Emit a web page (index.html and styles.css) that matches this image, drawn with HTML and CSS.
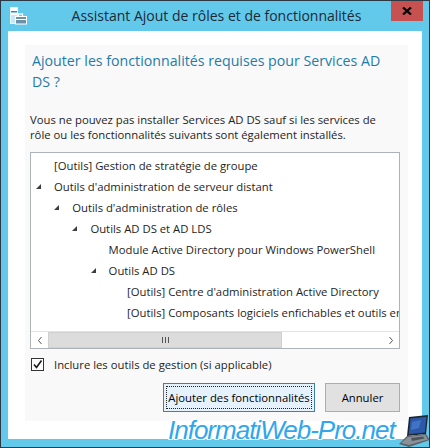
FILE: index.html
```html
<!DOCTYPE html>
<html lang="fr">
<head>
<meta charset="utf-8">
<title>Assistant Ajout de rôles et de fonctionnalités</title>
<link rel="stylesheet" href="styles.css">
</head>
<body>
<div class="window">
  <div class="titlebar">
    <svg class="app-icon" width="17" height="18" viewBox="0 0 17 18">
      <rect x="0.5" y="0.5" width="7" height="16" fill="#ffffff" stroke="#eaf6fc"/>
      <rect x="1" y="4" width="6" height="1.5" fill="#2f86c8"/>
      <rect x="1" y="8" width="6" height="8" fill="#c9e7f6"/>
      <rect x="8.5" y="7" width="4" height="3" fill="none" stroke="#ffffff" stroke-width="1.2"/>
      <rect x="5.5" y="9.5" width="11" height="7.5" fill="#6f8fa8" stroke="#ffffff" stroke-width="1"/>
      <line x1="6" y1="12.5" x2="16" y2="12.5" stroke="#ffffff" stroke-width="1"/>
    </svg>
    <div class="title">Assistant Ajout de rôles et de fonctionnalités</div>
    <div class="close">
      <svg width="10" height="8" viewBox="0 0 10 8"><path d="M1 0.5 L9 7.5 M9 0.5 L1 7.5" stroke="#000" stroke-width="2.2" fill="none"/></svg>
    </div>
  </div>
  <div class="client">
    <div class="panel">
      <h1 class="heading">Ajouter les fonctionnalités requises pour Services AD<br>DS ?</h1>
      <p class="intro">Vous ne pouvez pas installer Services AD DS sauf si les services de<br>rôle ou les fonctionnalités suivants sont également installés.</p>
      <div class="tree">
        <div class="tree-items">
          <div class="row lv0"><span class="toggle"></span><span class="label">[Outils] Gestion de stratégie de groupe</span></div>
          <div class="row lv0"><span class="toggle open"></span><span class="label">Outils d'administration de serveur distant</span></div>
          <div class="row lv1"><span class="toggle open"></span><span class="label">Outils d'administration de rôles</span></div>
          <div class="row lv2"><span class="toggle open"></span><span class="label">Outils AD DS et AD LDS</span></div>
          <div class="row lv3"><span class="toggle"></span><span class="label">Module Active Directory pour Windows PowerShell</span></div>
          <div class="row lv3"><span class="toggle open"></span><span class="label">Outils AD DS</span></div>
          <div class="row lv4"><span class="toggle"></span><span class="label">[Outils] Centre d'administration Active Directory</span></div>
          <div class="row lv4"><span class="toggle"></span><span class="label">[Outils] Composants logiciels enfichables et outils en ligne de commande AD DS</span></div>
        </div>
        <div class="hscroll">
          <div class="sbtn"><svg width="6" height="9" viewBox="0 0 6 9"><path d="M4.5 1 L1.5 4.5 L4.5 8" stroke="#555" stroke-width="1" fill="none"/></svg></div>
          <div class="track">
            <div class="thumb"><span class="grip"></span><span class="grip"></span><span class="grip"></span></div>
          </div>
          <div class="sbtn"><svg width="6" height="9" viewBox="0 0 6 9"><path d="M1.5 1 L4.5 4.5 L1.5 8" stroke="#555" stroke-width="1" fill="none"/></svg></div>
        </div>
      </div>
      <label class="check">
        <span class="box"><svg width="11" height="11" viewBox="0 0 11 11"><path d="M2 5.5 L4.5 8.5 L9.5 1.5" stroke="#1a1a1a" stroke-width="1.6" fill="none"/></svg></span>
        <span class="check-label">Inclure les outils de gestion (si applicable)</span>
      </label>
      <div class="buttons">
        <button class="btn primary"><span class="focus">Ajouter des fonctionnalités</span></button>
        <button class="btn">Annuler</button>
      </div>
    </div>
  </div>
  <div class="watermark">InformatiWeb-Pro.net</div>
  <svg class="laptop" width="32" height="34" viewBox="0 0 32 34">
    <polygon points="10,3 29,1 27,20 8,22" fill="#1c2633"/>
    <polygon points="11.5,4.5 27.5,2.8 25.8,18.6 9.8,20.3" fill="#2c58a8"/>
    <polygon points="13,8 22,6 20,14 12,16" fill="#4a7fd0" opacity="0.7"/>
    <polygon points="8,22 27,20 31,26 10,33 0,30" fill="#5a6068"/>
    <polygon points="9,23 26,21 29,25.5 10,31 2,29" fill="#8a9098"/>
    <polygon points="12,24 24,22.5 25.5,24.5 13,27" fill="#4d535b"/>
  </svg>
</div>
</body>
</html>
```

FILE: styles.css
```css
* { box-sizing: border-box; }
html, body { margin: 0; padding: 0; }
body {
  width: 430px;
  height: 448px;
  overflow: hidden;
  background: #62c9ea;
  font-family: "Open Sans", "Noto Sans", sans-serif;
}
.window {
  position: relative;
  width: 430px;
  height: 448px;
  border: 1px solid #2a3944;
  background: #62c9ea;
  display: flex;
  flex-direction: column;
  overflow: hidden;
}
.titlebar {
  height: 30px;
  flex: none;
  display: grid;
  grid-template-columns: minmax(0, 1fr) auto minmax(0, 1fr);
  align-items: start;
  padding: 0 6px 0 9px;
}
.app-icon { margin-top: 6px; display: block; }
.title {
  font-size: 14px;
  line-height: 18px;
  margin-top: 6px;
  color: #1c2a38;
  white-space: nowrap;
}
.close {
  justify-self: end;
  width: 32px;
  height: 21px;
  background: #c75050;
  margin-top: -1px;
  display: flex;
  align-items: center;
  justify-content: center;
}
.close svg { display: block; }
.client {
  flex: 1;
  min-width: 0;
  margin: 0 7px 8px 7px;
  background: #ffffff;
  padding: 14px 14px 18px 17px;
  display: flex;
}
.panel {
  flex: 1;
  min-width: 0;
  background: #f9f9f9;
  padding: 0 8px 9px 5px;
  display: flex;
  flex-direction: column;
}
.heading {
  margin: 6px 0 0 2px;
  font-weight: normal;
  font-size: 14.2px;
  line-height: 20.5px;
  color: #1f7ca9;
  white-space: nowrap;
}
.intro {
  margin: 19.5px 0 0 0;
  font-size: 11.3px;
  line-height: 15px;
  color: #1e1e1e;
  white-space: nowrap;
}
.tree {
  margin-top: 10.5px;
  height: 197px;
  min-width: 0;
  border: 1px solid #aeb3b9;
  background: #ffffff;
  display: flex;
  flex-direction: column;
  overflow: hidden;
}
.tree-items {
  flex: 1;
  min-width: 0;
  padding-top: 2px;
  overflow: hidden;
}
.row {
  height: 21px;
  display: flex;
  align-items: center;
  font-size: 11.3px;
  color: #1e1e1e;
  white-space: nowrap;
  padding-left: 3px;
}
.lv1 { padding-left: 21.2px; }
.lv2 { padding-left: 39.4px; }
.lv3 { padding-left: 57.6px; }
.lv4 { padding-left: 76px; }
.toggle {
  flex: none;
  width: 20px;
  height: 21px;
  position: relative;
}
.toggle.open::after {
  content: "";
  position: absolute;
  left: 2px;
  top: 8px;
  width: 0;
  height: 0;
  border-style: solid;
  border-width: 0 0 5px 5px;
  border-color: transparent transparent #3d3d3d transparent;
}
.hscroll {
  flex: none;
  height: 17px;
  display: flex;
  border-top: 1px solid #e3e3e3;
  background: #ffffff;
}
.sbtn {
  width: 17px;
  flex: none;
  display: flex;
  align-items: center;
  justify-content: center;
}
.sbtn svg { display: block; }
.track {
  flex: 1;
  display: flex;
}
.thumb {
  width: 234px;
  background: #dcdcdc;
  border: 1px solid #d0d0d0;
  display: flex;
  align-items: center;
  justify-content: center;
  gap: 2px;
}
.grip {
  width: 1px;
  height: 6px;
  background: #555;
}
.check {
  margin-top: 7.5px;
  display: flex;
  align-items: center;
  height: 15px;
  padding-left: 1px;
}
.box {
  width: 13px;
  height: 13px;
  border: 1px solid #333;
  background: #fff;
  display: flex;
  align-items: center;
  justify-content: center;
}
.box svg { display: block; }
.check-label {
  margin-left: 10px;
  font-size: 11.3px;
  color: #1e1e1e;
  white-space: nowrap;
}
.buttons {
  margin-top: 11.5px;
  display: flex;
  justify-content: flex-end;
  gap: 10px;
}
.btn {
  height: 29px;
  font-family: inherit;
  font-size: 11.3px;
  color: #000;
  background: #e1e1e1;
  border: 1px solid #adadad;
  padding: 0;
  width: 75px;
}
.btn.primary {
  width: 152px;
  background: #e5f1fb;
  border-color: #3c7fb1;
  padding: 2px;
}
.focus {
  display: flex;
  align-items: center;
  justify-content: center;
  height: 100%;
  border: 1px dotted #222;
}
.watermark {
  position: absolute;
  left: 167px;
  top: 416px;
  white-space: nowrap;
  font-family: "Liberation Sans", Arial, sans-serif;
  font-style: italic;
  font-size: 26px;
  line-height: 26px;
  letter-spacing: -1px;
  color: #2ea7ee;
  text-shadow: 1px 0 0 #fff, -1px 0 0 #fff, 0 1px 0 #fff, 0 -1px 0 #fff, 1px 1px 0 #fff, -1px -1px 0 #fff, 1px -1px 0 #fff, -1px 1px 0 #fff;
}
.laptop {
  position: absolute;
  right: -2px;
  bottom: -1px;
  display: block;
}
```
